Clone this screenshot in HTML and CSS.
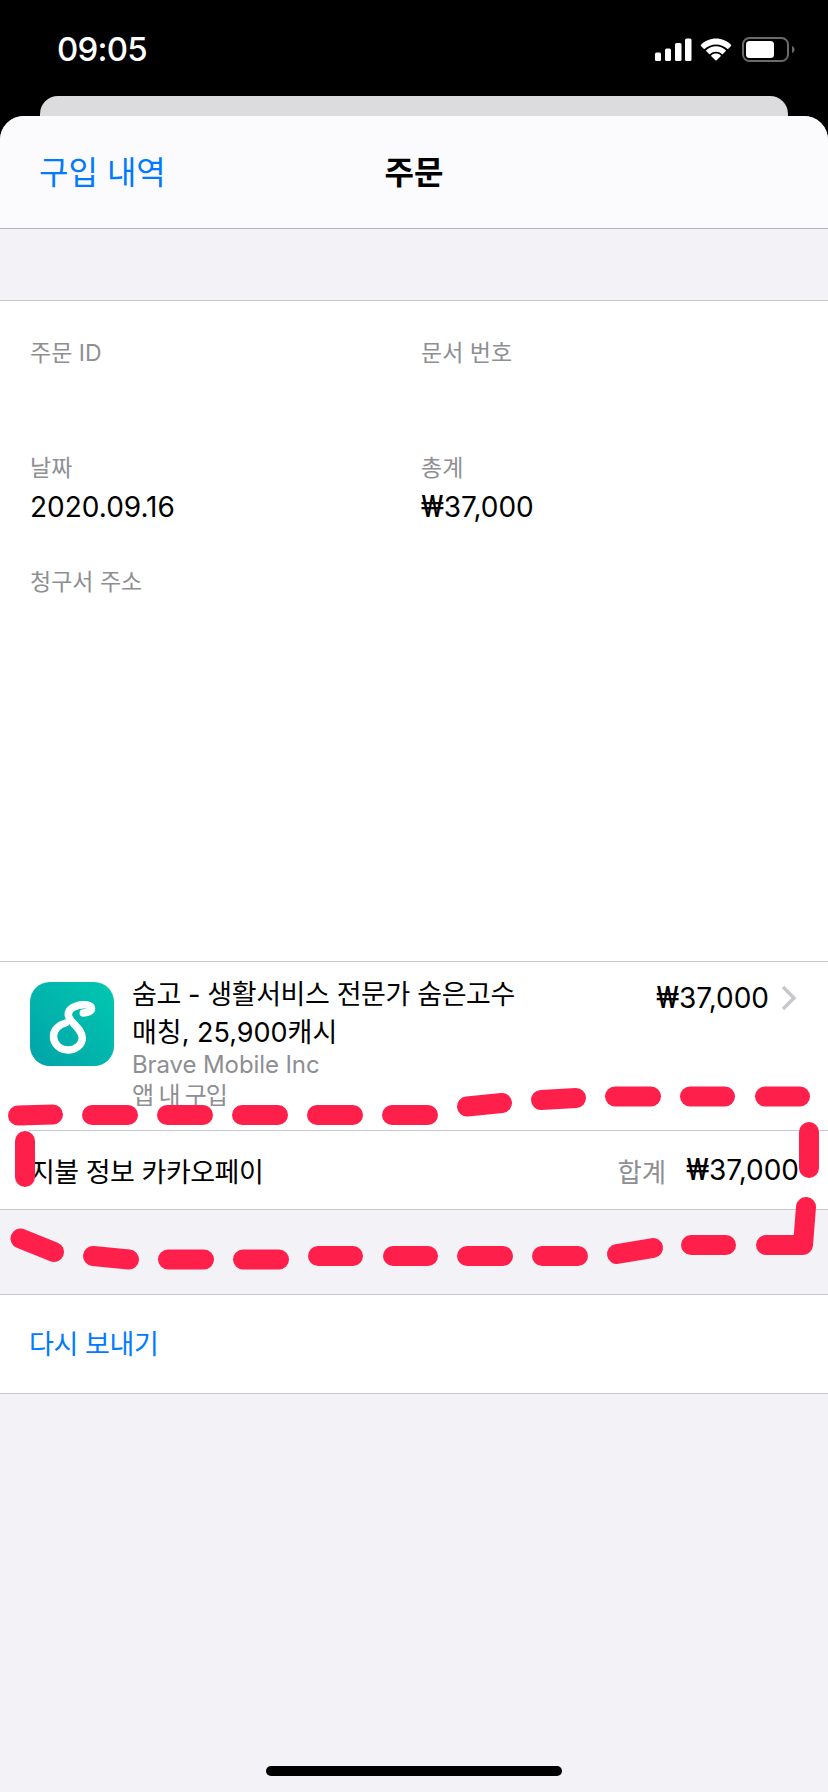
FILE: index.html
```html
<!DOCTYPE html>
<html lang="ko">
<head>
<meta charset="utf-8">
<title>주문</title>
<link rel="stylesheet" href="styles.css">
</head>
<body>
<div class="screen">
  <header class="status">
    <span class="time">09:05</span>
    <div class="status-icons">
      <svg class="signal" width="37" height="23" viewBox="0 0 37 23"><rect x="0" y="14.500" width="6" height="8.500" rx="1.500"/><rect x="10" y="10.500" width="6" height="12.500" rx="1.500"/><rect x="20" y="5" width="6.500" height="18" rx="1.500"/><rect x="30" y="0.500" width="6.500" height="22.500" rx="1.500"/></svg>
      <svg class="wifi" width="32" height="24" viewBox="0 0 32 24"><path d="M16 7.400C20.300 7.400 24.200 9 27.200 11.700C27.500 12 28 12 28.300 11.700L31 9C31.400 8.600 31.400 8 31 7.700C27 4 21.800 1.600 16 1.600C10.200 1.600 5 4 1 7.700C.6 8 .6 8.600 1 9L3.700 11.700C4 12 4.500 12 4.800 11.700C7.800 9 11.700 7.400 16 7.400Z"/><path d="M16 14.800C18.200 14.800 20.200 15.600 21.800 17C22.100 17.300 22.600 17.300 22.900 17L25.600 14.300C26 13.900 26 13.300 25.600 13C23 10.700 19.700 9.300 16 9.300C12.300 9.300 9 10.700 6.400 13C6 13.300 6 13.900 6.400 14.300L9.100 17C9.400 17.300 9.900 17.300 10.200 17C11.800 15.600 13.800 14.800 16 14.800Z"/><path d="M16 23.600C16.200 23.600 16.400 23.500 16.600 23.300L20.500 19.400C20.900 19 20.900 18.400 20.400 18.100C19.200 17.100 17.700 16.600 16 16.600C14.300 16.600 12.800 17.100 11.600 18.100C11.100 18.400 11.100 19 11.500 19.400L15.400 23.300C15.600 23.500 15.800 23.600 16 23.600Z"/></svg>
      <svg class="battery" width="53" height="25" viewBox="0 0 53 25"><rect class="battery-case" x="1" y="1" width="45" height="23" rx="6.500"/><rect class="battery-fill" x="4" y="4" width="28" height="17" rx="3.500"/><path class="battery-nub" d="M50 9v7c1.400-.6 2.600-2 2.600-3.500s-1.200-2.900-2.600-3.500z"/></svg>
    </div>
  </header>
  <div class="backcard"></div>
  <main class="sheet">
    <nav class="nav">
      <a class="nav-back">구입 내역</a>
      <h1 class="nav-title">주문</h1>
      <span></span>
    </nav>
    <div class="spacer-top"></div>
    <section class="info">
      <div class="field"><div class="label">주문 ID</div></div>
      <div class="field"><div class="label">문서 번호</div></div>
      <div class="field"><div class="label">날짜</div><div class="value">2020.09.16</div></div>
      <div class="field"><div class="label">총계</div><div class="value"><span class="won">₩</span>37,000</div></div>
      <div class="field"><div class="label">청구서 주소</div></div>
    </section>
    <section class="item">
      <svg class="app-icon" width="84" height="84" viewBox="0 0 84 84">
        <defs><linearGradient id="appgrad" x1="1" y1="0" x2="0" y2="1"><stop offset="0" stop-color="#00c8b0"/><stop offset="1" stop-color="#02a3a8"/></linearGradient></defs>
        <rect width="84" height="84" rx="20" fill="url(#appgrad)"/>
        <path class="app-s" d="M53.300 31C57 31 61.500 29.500 61.500 26.500C61.500 23.500 57.500 22.500 53.300 22.700C45 23 38 27 38.300 33C38.600 40 52.300 46 52.300 56C52.300 63 45.500 68 38 68C29.500 68 23.500 61.500 23.500 54.500C23.500 48 28.500 43 35.500 41"/>
      </svg>
      <div class="item-text">
        <div class="item-title"><span class="item-title-ko">숨고 - 생활서비스 전문가 숨은고수</span> 매칭, 25,900캐시</div>
        <div class="item-sub item-sub-en">Brave Mobile Inc</div>
        <div class="item-sub item-sub-ko">앱 내 구입</div>
      </div>
      <div class="item-price"><span class="won">₩</span>37,000</div>
      <svg class="chevron" width="16" height="26" viewBox="0 0 16 26"><path d="M2 2l11 11L2 24"/></svg>
    </section>
    <section class="payment">
      <div class="payment-inner">
        <span class="payment-title">지불 정보 카카오페이</span>
        <span class="payment-total-label">합계</span>
        <span class="payment-total"><span class="won">₩</span>37,000</span>
      </div>
    </section>
    <div class="spacer-mid"></div>
    <section class="resend"><a class="resend-link">다시 보내기</a></section>
  </main>
  <svg class="scribble" width="828" height="1792" viewBox="0 0 828 1792">
    <path d="M18 1115.500L53 1114.500"/>
    <path d="M92 1115H128"/>
    <path d="M167 1115H203"/>
    <path d="M242 1115H278"/>
    <path d="M317 1115H353"/>
    <path d="M392 1115H428"/>
    <path d="M467 1106.500L502 1103"/>
    <path d="M541 1100L576 1098"/>
    <path d="M615 1096.500H651"/>
    <path d="M690 1096.500H725"/>
    <path d="M765 1096.500H800"/>
    <path d="M25 1141V1177"/>
    <path d="M809 1132V1168"/>
    <path d="M20.500 1238.500L54 1252"/>
    <path d="M93 1256L129 1259.500"/>
    <path d="M168 1259.500H204"/>
    <path d="M243 1259.500H279"/>
    <path d="M318 1256H353"/>
    <path d="M393 1256H428"/>
    <path d="M467 1256H503"/>
    <path d="M542 1256H578"/>
    <path d="M617 1254L653 1248"/>
    <path d="M691 1245H726"/>
    <path d="M766 1245H803L806 1207"/>
  </svg>
  <div class="home-indicator"></div>
</div>
</body>
</html>
```
FILE: styles.css
```css
* { box-sizing: border-box; margin: 0; padding: 0; }
html, body { background: #000; }
body { font-family: Inter, "Noto Sans CJK KR", sans-serif; }
.screen { position: relative; width: 828px; height: 1792px; display: flex; flex-direction: column; overflow: hidden; background: #000; }
.won { font-family: Roboto, sans-serif; font-size: 1.1em; line-height: 1; }

.status { height: 96px; display: flex; justify-content: space-between; align-items: center; padding: 2px 33px 0 57px; color: #fff; }
.time { font-size: 33px; font-weight: 500; letter-spacing: -0.8px; }
.status-icons { display: flex; align-items: center; }
.signal rect { fill: #fff; }
.wifi { margin-left: 8px; }
.wifi path { fill: #fff; }
.battery { margin-left: 10px; }
.battery-case { fill: none; stroke: #6a6a6a; stroke-width: 2; }
.battery-fill { fill: #fff; }
.battery-nub { fill: #6a6a6a; }

.backcard { height: 20px; margin: 0 40px; background: #dcdcde; border-radius: 18px 18px 0 0; }
.sheet { flex: 1; display: flex; flex-direction: column; background: #f2f2f7; border-radius: 24px 24px 0 0; overflow: hidden; }

.nav { height: 113px; flex: none; display: grid; grid-template-columns: 1fr auto 1fr; align-items: center; padding: 0 39px 5px; background: #fbfbfd; border-bottom: 1.500px solid #b2b2b6; }
.nav-back { font-size: 32px; color: #007aff; }
.nav-title { font-size: 32px; font-weight: 600; color: #000; }

.spacer-top { height: 71px; flex: none; }

.info { height: 661px; flex: none; background: #fff; border-top: 1px solid #c8c8cc; padding: 35px 0 0 30px; display: grid; grid-template-columns: 391px 1fr; grid-auto-rows: 114.500px; }
.label { font-size: 23px; line-height: 34px; color: #8e8e93; }
.value { font-size: 28px; line-height: 44px; color: #000; }

.item { height: 169px; flex: none; background: #fff; border-top: 1px solid #c8c8cc; padding: 20px 31px 0 30px; display: flex; align-items: flex-start; }
.app-icon { flex: none; }
.app-s { fill: none; stroke: #fff; stroke-width: 7.500; stroke-linecap: round; }
.item-text { width: 400px; margin-left: 18px; margin-top: -6px; }
.item-title { font-size: 27px; line-height: 38px; color: #000; }
.item-title-ko { letter-spacing: -0.4px; }
.item-sub { font-size: 24px; line-height: 30px; color: #8e8e93; }
.item-sub-en { letter-spacing: -0.1px; margin-top: -2px; }
.item-sub-ko { letter-spacing: -1.2px; margin-top: 1px; }
.item-price { margin-left: auto; font-size: 28px; line-height: 38px; color: #000; margin-top: -3px; }
.chevron { margin-left: 12px; margin-top: 3px; }
.chevron path { fill: none; stroke: #c7c7cc; stroke-width: 3.500; }

.payment { height: 80px; flex: none; background: #fff; padding-left: 29px; border-bottom: 1px solid #c8c8cc; }
.payment-inner { height: 100%; border-top: 1px solid #c8c8cc; display: flex; align-items: center; padding: 0 29px 0 1px; }
.payment-title { font-size: 27px; color: #000; letter-spacing: -0.5px; }
.payment-total-label { margin-left: auto; font-size: 26.500px; color: #8e8e93; }
.payment-total { margin-left: 20px; font-size: 28px; color: #000; }

.spacer-mid { height: 84px; flex: none; }

.resend { height: 100px; flex: none; background: #fff; border-top: 1px solid #c8c8cc; border-bottom: 1px solid #c8c8cc; display: flex; align-items: center; padding: 0 0 3px 29px; }
.resend-link { font-size: 27px; color: #007aff; letter-spacing: -0.4px; }

.scribble { position: absolute; left: 0; top: 0; pointer-events: none; }
.scribble path { fill: none; stroke: #ff1f4b; stroke-width: 20; stroke-linecap: round; stroke-linejoin: round; }
.home-indicator { position: absolute; left: 266px; top: 1766px; width: 296px; height: 10px; border-radius: 5px; background: #000; }
```
